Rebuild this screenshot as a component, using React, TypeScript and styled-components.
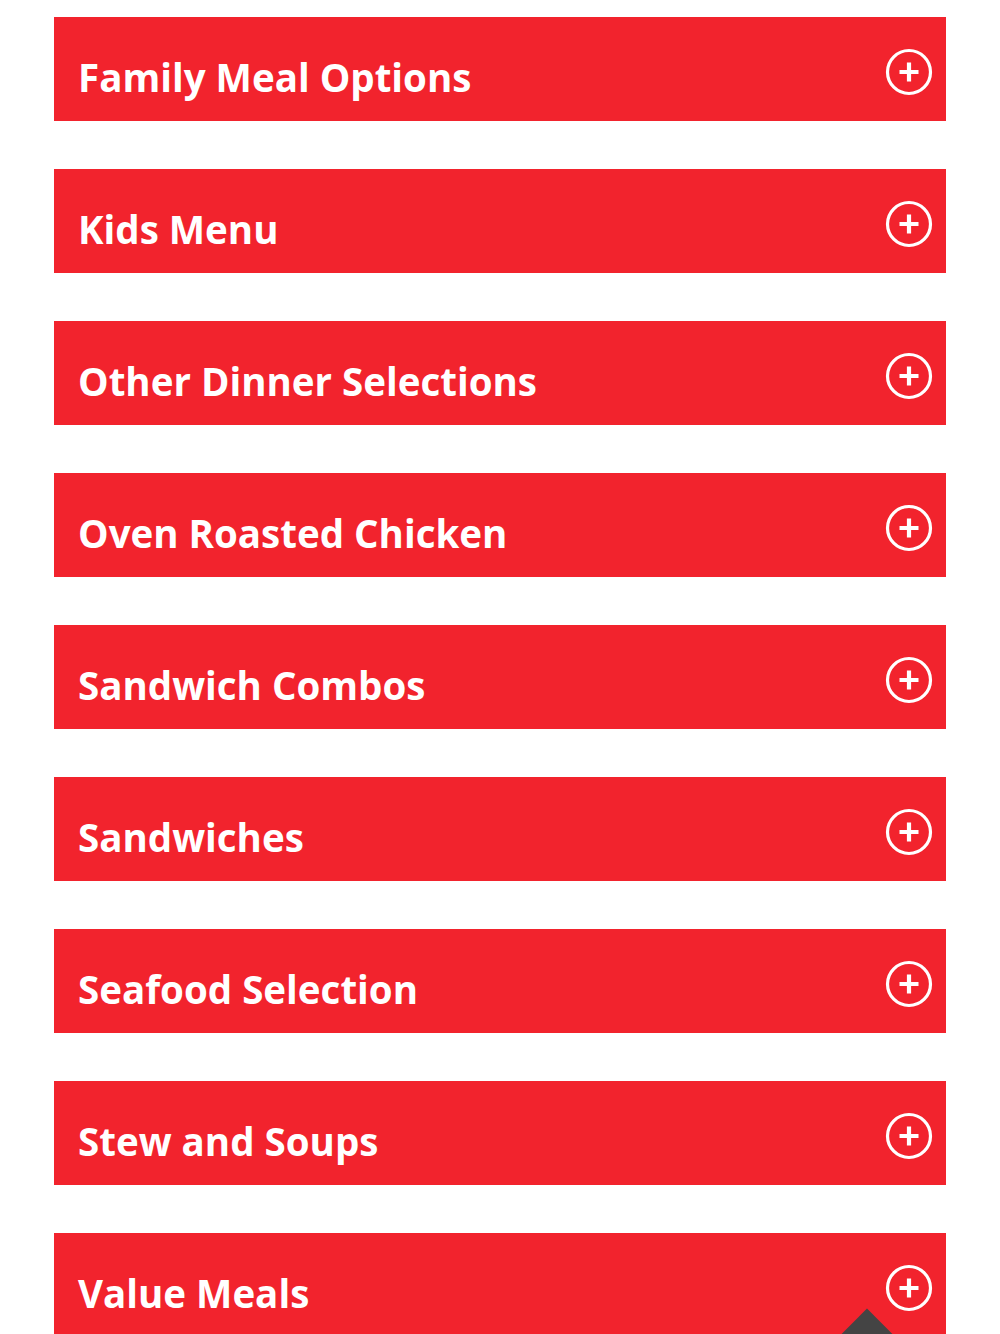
import React from "react";
import styled, { createGlobalStyle } from "styled-components";

const GlobalStyle = createGlobalStyle`
  html, body {
    margin: 0;
    padding: 0;
    background: #ffffff;
    font-family: "Open Sans", "Liberation Sans", sans-serif;
  }
`;

const MenuList = styled.div`
  display: flex;
  flex-direction: column;
  gap: 48px;
  padding: 17px 54px 0 54px;
`;

const Bar = styled.div`
  height: 104px;
  box-sizing: border-box;
  background: #f2232d;
  display: flex;
  justify-content: space-between;
  align-items: flex-start;
  padding: 0 13px 0 24px;
  cursor: pointer;
`;

const Title = styled.h3`
  margin: 0;
  padding-top: 36px;
  color: #ffffff;
  font-family: "Open Sans", "Liberation Sans", sans-serif;
  font-weight: 750;
  font-size: 38.5px;
  line-height: 48px;
  letter-spacing: 0;
`;

const IconWrap = styled.span`
  display: block;
  margin-top: 31px;
  width: 48px;
  height: 48px;
`;

const TopButton = styled.div`
  position: fixed;
  left: 825px;
  top: 1326px;
  width: 84px;
  height: 84px;
  background: #444444;
  transform: rotate(45deg);
`;

const PlusCircle: React.FC = () => (
  <svg width="48" height="48" viewBox="0 0 48 48">
    <circle cx="24" cy="24" r="21.5" fill="none" stroke="#fff" strokeWidth="3.2" />
    <path d="M24 14.5v19M14.5 24h19" stroke="#fff" strokeWidth="4.2" strokeLinecap="butt" />
  </svg>
);

const items = [
  "Family Meal Options",
  "Kids Menu",
  "Other Dinner Selections",
  "Oven Roasted Chicken",
  "Sandwich Combos",
  "Sandwiches",
  "Seafood Selection",
  "Stew and Soups",
  "Value Meals",
];

const App: React.FC = () => {
  return (
    <>
      <GlobalStyle />
      <MenuList>
        {items.map((item) => (
          <Bar key={item}>
            <Title>{item}</Title>
            <IconWrap>
              <PlusCircle />
            </IconWrap>
          </Bar>
        ))}
      </MenuList>
      <TopButton />
    </>
  );
};

export default App;
